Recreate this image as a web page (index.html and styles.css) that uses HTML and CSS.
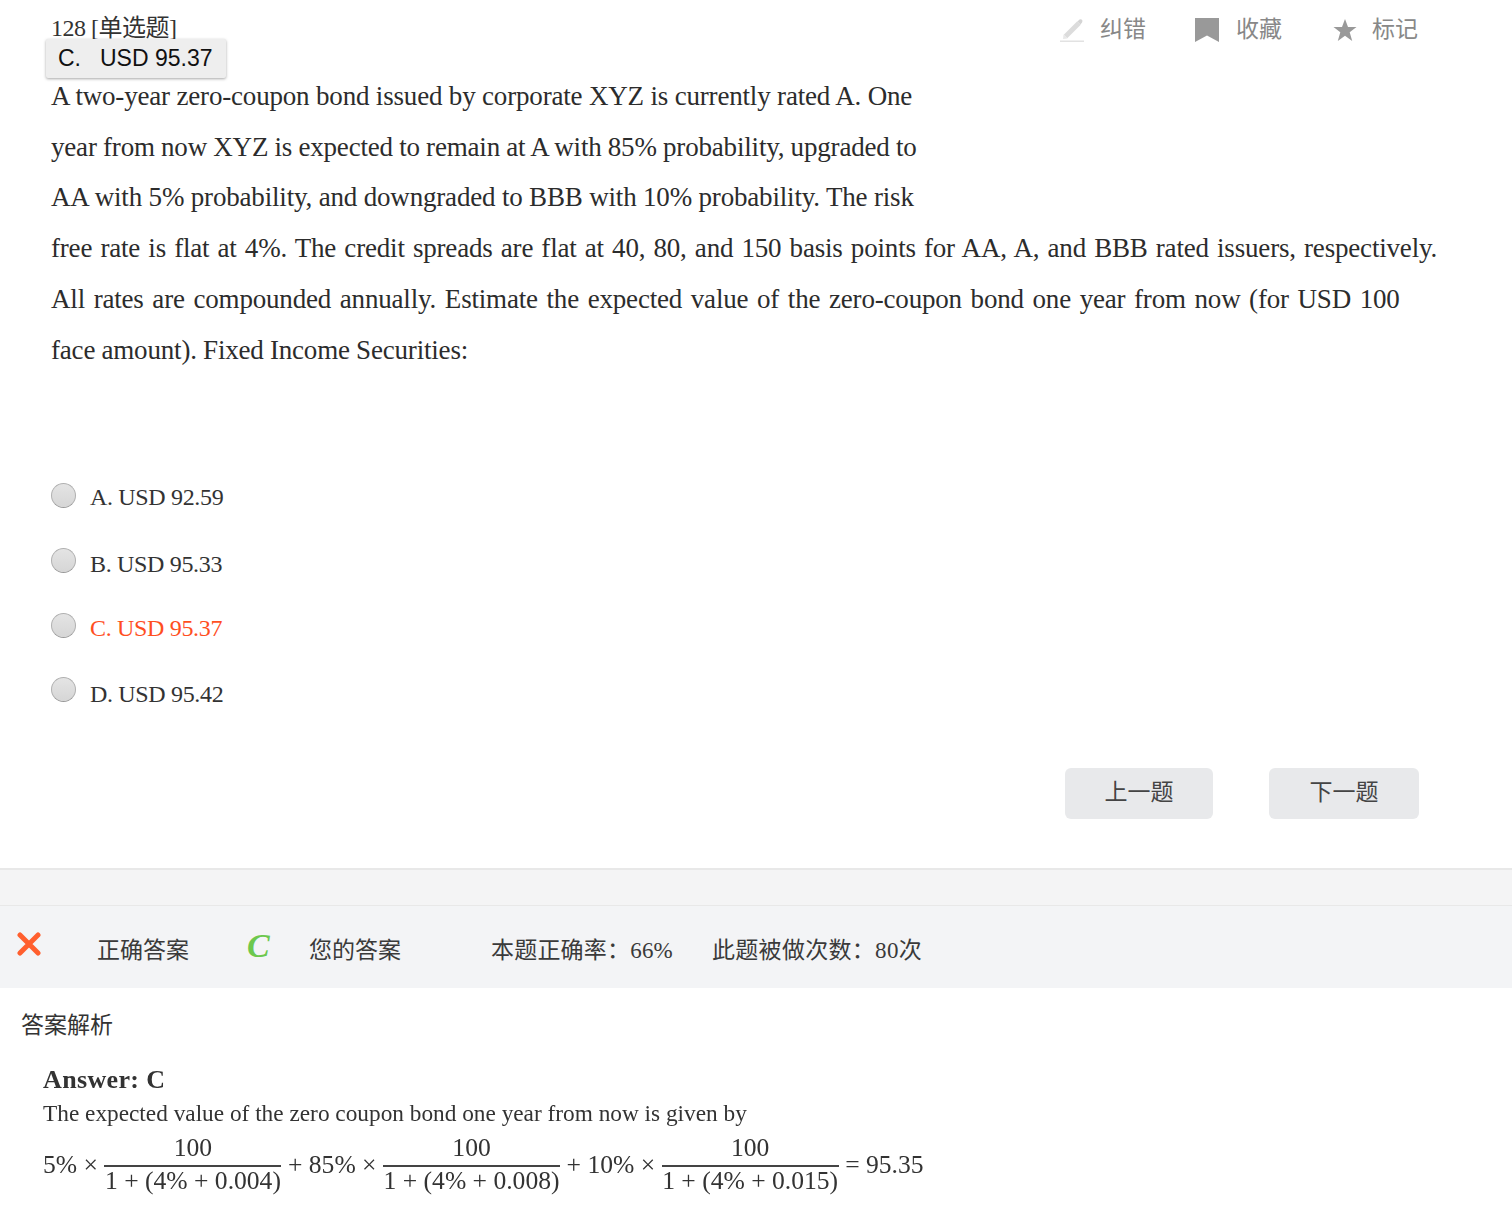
FILE: index.html
```html
<!doctype html>
<html lang="zh">
    <head>
        <meta charset="utf-8">
        <title>128 [单选题]</title>
        <link rel="stylesheet" href="styles.css">
    </head>
    <body>
        <div class="question">
            <div class="topbar">
                <div class="qnum">128 [单选题]</div>
                <div class="tools">
                    <div class="tool tool-fix">
                        <svg width="26" height="24" viewBox="0 0 26 24"><path d="M6.500 18.500L20 5" stroke="#dcdcdc" stroke-width="5"/><path d="M18.500 3.500L20.500 1.500Q22 .8 23 1.800Q24 3 23 4.500L21.500 6.500Z" fill="#d4d4d4"/><path d="M4 21L4.500 16.500L8.500 20.500Z" fill="#e8e8e8"/><rect x="1" y="22.500" width="24" height="1.500" fill="#e2e2e2"/></svg>
                        <span>纠错</span>
                    </div>
                    <div class="tool tool-save">
                        <svg width="24" height="24" viewBox="0 0 24 24"><path d="M0 0H24V24L12 17.500L0 24Z" fill="#999"/></svg>
                        <span>收藏</span>
                    </div>
                    <div class="tool tool-mark">
                        <svg width="24" height="24" viewBox="0 0 24 24"><path d="M12 1L15 9H23.500L16.700 14.200L19.200 23L12 17.800L4.800 23L7.300 14.200L0.500 9H9Z" fill="#999"/></svg>
                        <span>标记</span>
                    </div>
                </div>
            </div>
            <div class="selection-tip"><span class="tip-letter">C.</span>USD 95.37</div>
            <div class="stem">
                <div>A two-year zero-coupon bond issued by corporate XYZ is currently rated A. One</div>
                <div class="tight">year from now XYZ is expected to remain at A with 85% probability, upgraded to</div>
                <div>AA with 5% probability, and downgraded to BBB with 10% probability. The risk</div>
                <div class="just-a">free rate is flat at 4%. The credit spreads are flat at 40, 80, and 150 basis points for AA, A, and BBB rated issuers, respectively.</div>
                <div class="just-b">All rates are compounded annually. Estimate the expected value of the zero-coupon bond one year from now (for USD 100</div>
                <div class="tight">face amount). Fixed Income Securities:</div>
            </div>
            <div class="options">
                <div class="option"><span class="radio"></span><span class="opt-text">A. USD 92.59</span></div>
                <div class="option"><span class="radio"></span><span class="opt-text">B. USD 95.33</span></div>
                <div class="option correct"><span class="radio"></span><span class="opt-text">C. USD 95.37</span></div>
                <div class="option"><span class="radio"></span><span class="opt-text">D. USD 95.42</span></div>
            </div>
            <div class="pager">
                <div class="btn btn-prev">上一题</div>
                <div class="btn btn-next">下一题</div>
            </div>
        </div>
        <div class="band"></div>
        <div class="result">
            <svg class="wrong" width="24" height="24" viewBox="0 0 24 24"><path d="M3 3L21 21M21 3L3 21" stroke="#ff5f2e" stroke-width="5" stroke-linecap="round"/></svg>
            <span class="res-label">正确答案</span>
            <span class="res-letter">C</span>
            <span class="res-yours">您的答案</span>
            <span class="res-rate">本题正确率：66%</span>
            <span class="res-count">此题被做次数：80次</span>
        </div>
        <div class="analysis">
            <div class="analysis-title">答案解析</div>
            <div class="analysis-body">
                <div class="ans">Answer: C</div>
                <div class="ans-line">The expected value of the zero coupon bond one year from now is given by</div>
                <div class="formula">
                    <span class="term">5% ×</span>
                    <span class="frac"><span class="num">100</span><span class="den">1 + (4% + 0.004)</span></span>
                    <span class="term">+ 85% ×</span>
                    <span class="frac"><span class="num">100</span><span class="den">1 + (4% + 0.008)</span></span>
                    <span class="term">+ 10% ×</span>
                    <span class="frac"><span class="num">100</span><span class="den">1 + (4% + 0.015)</span></span>
                    <span class="term">= 95.35</span>
                </div>
            </div>
        </div>
    </body>
</html>
```

FILE: styles.css
```css
html {
    height: 100%;
}
body {
    margin: 0;
    background: #fff;
    color: #333;
    font-family: "Liberation Serif", "Noto Sans CJK SC", serif;
    overflow-x: hidden;
}
.question {
    position: relative;
    height: 868px;
    padding-left: 51px;
    padding-right: 94px;
    box-sizing: border-box;
}
.topbar {
    display: flex;
    justify-content: space-between;
    height: 71px;
    padding-top: 14px;
    box-sizing: border-box;
}
.qnum {
    font-size: 24px;
    line-height: 30px;
    letter-spacing: -0.5px;
    margin-top: -1px;
}
.tools {
    display: flex;
    color: #888;
    font-size: 23px;
    font-family: "Noto Sans CJK SC", sans-serif;
}
.tool {
    display: flex;
    align-items: center;
    height: 30px;
}
.tool svg {
    margin-top: 2px;
    margin-right: 15px;
}
.tool span {
    margin-bottom: 4px;
}
.tool-save {
    margin-left: 49px;
}
.tool-save svg {
    margin-right: 17px;
}
.tool-mark {
    margin-left: 51px;
}
.selection-tip {
    position: absolute;
    left: 46px;
    top: 39px;
    width: 180px;
    height: 39px;
    box-sizing: border-box;
    padding-left: 12px;
    background: #eee;
    border-radius: 2px;
    box-shadow: 0 1px 3px rgba(0, 0, 0, 0.35);
    color: #111;
    font-family: "Liberation Sans", sans-serif;
    font-size: 23px;
    line-height: 38px;
}
.tip-letter {
    display: inline-block;
    width: 42px;
}
.stem {
    font-size: 27px;
    line-height: 50.7px;
    letter-spacing: -0.18px;
    white-space: nowrap;
    color: #2c2c2c;
}
.tight {
    word-spacing: -0.3px;
}
.just-a {
    word-spacing: 1.6px;
}
.just-b {
    word-spacing: 2.1px;
}
.options {
    margin-top: 107px;
    font-size: 24px;
    letter-spacing: -0.33px;
}
.option {
    display: flex;
    height: 64.7px;
    align-items: flex-start;
}
.radio {
    width: 25px;
    height: 25px;
    box-sizing: border-box;
    border-radius: 50%;
    border: 1px solid #b0b0b0;
    border-bottom-color: #999;
    background: linear-gradient(#e4e4e4, #d6d6d6);
    margin-top: 1px;
    margin-right: 14px;
}
.opt-text {
    line-height: 30px;
}
.option:nth-child(2) .opt-text {
    margin-top: 2px;
}
.option:nth-child(3) .opt-text {
    margin-top: 1px;
}
.option:nth-child(4) .opt-text {
    margin-top: 3px;
}
.correct .opt-text {
    color: #ff4f1f;
}
.pager {
    display: flex;
    justify-content: flex-end;
    margin-top: 27px;
    margin-right: -1px;
}
.btn {
    height: 51px;
    background: #e8e9eb;
    border-radius: 6px;
    font-family: "Noto Sans CJK SC", sans-serif;
    font-size: 23px;
    line-height: 45px;
    text-align: center;
    color: #444;
}
.btn-prev {
    width: 148px;
}
.btn-next {
    width: 150px;
    margin-left: 56px;
}
.band {
    height: 35px;
    background: #f4f4f5;
    border-top: 2px solid #e8e8e8;
    border-bottom: 1px solid #e8e8e8;
}
.result {
    display: flex;
    align-items: center;
    height: 82px;
    padding-top: 2px;
    box-sizing: border-box;
    background: #f3f4f6;
    font-size: 23px;
    color: #3a3a3a;
    white-space: nowrap;
}
.wrong {
    margin-left: 17px;
    margin-top: -8px;
}
.res-label {
    margin-left: 56px;
    width: 92px;
}
.res-letter {
    margin-left: 58px;
    width: 62px;
    margin-top: -4px;
    color: #6cc84e;
    font-weight: bold;
    font-style: italic;
    font-size: 34px;
}
.res-yours {
    width: 92px;
}
.res-rate {
    margin-left: 90px;
    width: 181px;
    letter-spacing: 0.2px;
}
.res-count {
    margin-left: 40px;
    letter-spacing: 0.3px;
}
.analysis-title {
    margin-left: 21px;
    margin-top: 20px;
    font-family: "Noto Sans CJK SC", sans-serif;
    font-size: 23px;
    line-height: 30px;
    color: #333;
}
.analysis-body {
    margin-left: 43px;
    margin-top: 27px;
    filter: blur(0.5px);
    color: #333;
}
.ans {
    font-size: 26px;
    font-weight: bold;
    line-height: 30px;
    letter-spacing: 0.35px;
}
.ans-line {
    font-size: 23.3px;
    line-height: 30px;
    margin-top: 3px;
}
.formula {
    display: flex;
    align-items: center;
    gap: 6.5px;
    font-size: 25.6px;
    margin-top: 3px;
}
.term {
    margin-top: 4px;
}
.frac {
    display: inline-flex;
    flex-direction: column;
    text-align: center;
    width: 177px;
}
.num {
    line-height: 34px;
    border-bottom: 2px solid #444;
}
.den {
    line-height: 28px;
    white-space: nowrap;
}
```
